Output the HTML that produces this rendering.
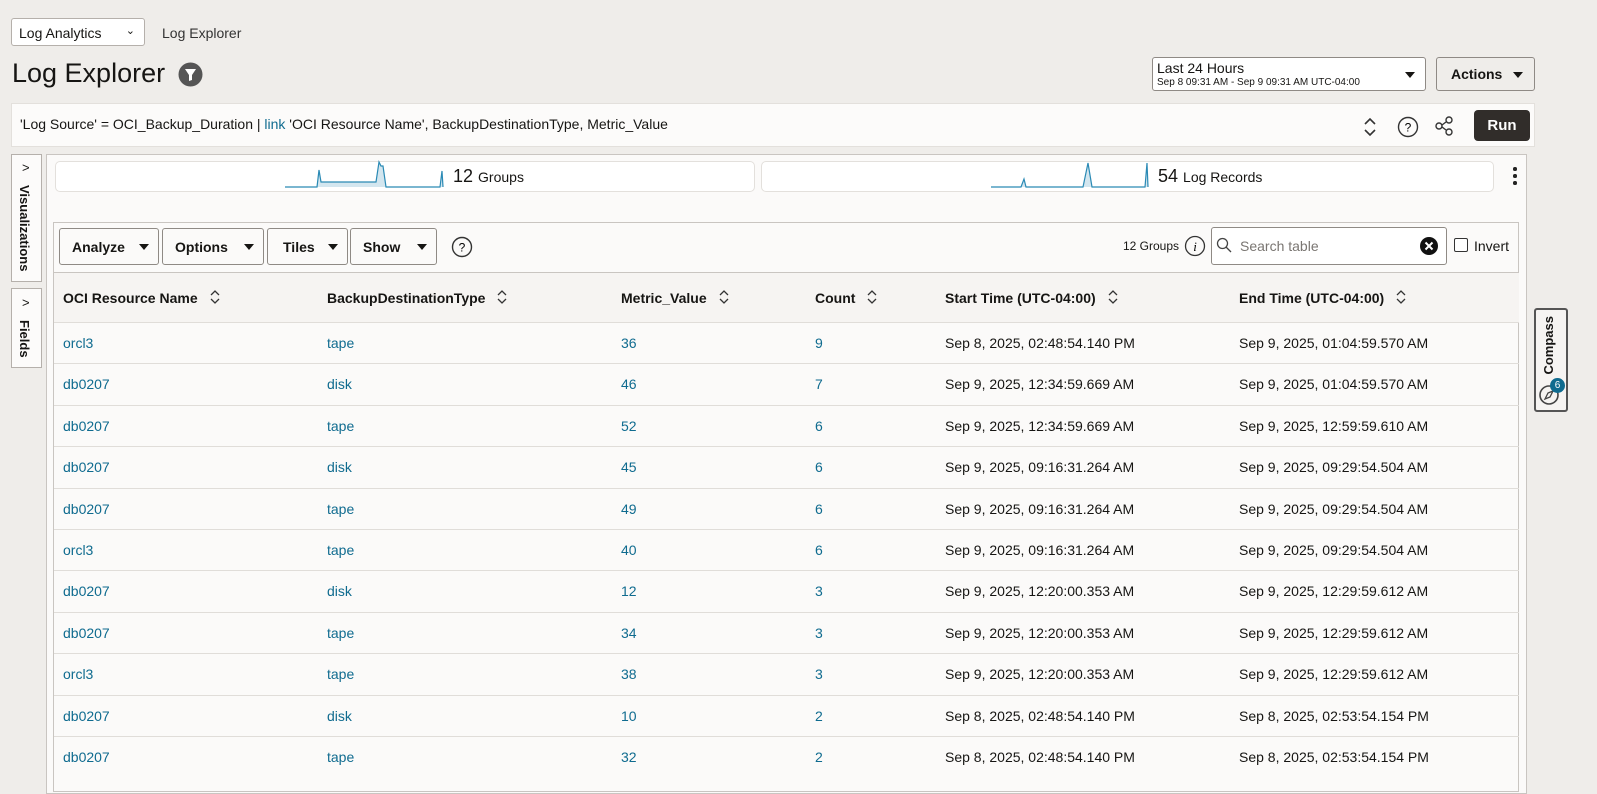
<!DOCTYPE html>
<html><head><meta charset="utf-8"><style>
*{box-sizing:border-box;margin:0;padding:0}
body{width:1597px;height:786px;overflow:hidden;background:#efedea;font-family:"Liberation Sans",sans-serif;color:#161513;position:relative}
.a{position:absolute}
.btn{position:absolute;border:1px solid #8f8a85;border-radius:3px;background:#fbfaf9;font-weight:bold;font-size:14px;display:flex;align-items:center;padding-left:12px}
.tri{display:inline-block;width:0;height:0;border-left:5px solid transparent;border-right:5px solid transparent;border-top:6px solid #161513;position:absolute}
.link{color:#0f6b8f}
.row{position:absolute;left:54px;width:1465px;height:41.4px;border-top:1px solid #e0ddd9;font-size:14px;line-height:41px}
.row span{position:absolute;top:0}
.sort{display:inline-block;margin-left:12px;vertical-align:middle;position:relative;top:-2px}
</style></head><body>
<div class="a" style="left:11px;top:18px;width:134px;height:28px;border:1px solid #b5b0ab;border-radius:3px;background:#fff;font-size:14px;padding:6px 7px">Log Analytics<span class="a" style="right:9px;top:5px;font-size:11px">&#8964;</span></div>
<div class="a" style="left:162px;top:25px;font-size:14px;color:#333">Log Explorer</div>
<div class="a" style="left:12px;top:58px;font-size:27px">Log Explorer</div>
<svg class="a" style="left:178px;top:62px" width="25" height="25"><circle cx="12.5" cy="12.5" r="12" fill="#555"/><path d="M7 7h11l-4 6v5l-3 1v-6z" fill="#fff"/></svg>
<div class="a" style="left:1152px;top:57px;width:274px;height:34px;border:1px solid #8f8a85;border-radius:3px;background:#fff;padding:2px 4px"><div style="font-size:14px">Last 24 Hours</div><div style="font-size:10px;margin-top:1px">Sep 8 09:31 AM - Sep 9 09:31 AM UTC-04:00</div><span class="tri" style="right:10px;top:14px"></span></div>
<div class="btn" style="left:1436px;top:57px;width:99px;height:34px;background:#efedea;padding-left:14px">Actions<span class="tri" style="right:11px;top:14px"></span></div>
<div class="a" style="left:11px;top:103px;width:1524px;height:44px;background:#fcfbfa;border:1px solid #e3e0dc"></div>
<div class="a" style="left:20px;top:116px;font-size:14px">'Log Source' = OCI_Backup_Duration | <span class="link">link</span> 'OCI Resource Name', BackupDestinationType, Metric_Value</div>
<svg class="a" style="left:1363px;top:117px" width="14" height="20"><path d="M2 7l5-5 5 5M2 13l5 5 5-5" fill="none" stroke="#333" stroke-width="1.6"/></svg>
<svg class="a" style="left:1397px;top:116px" width="22" height="22"><circle cx="11" cy="11" r="9.5" fill="none" stroke="#333" stroke-width="1.4"/><text x="11" y="15.5" font-size="12" text-anchor="middle" font-family="Liberation Sans">?</text></svg>
<svg class="a" style="left:1435px;top:116px" width="20" height="20"><circle cx="4" cy="10" r="3" fill="none" stroke="#333" stroke-width="1.4"/><circle cx="14" cy="4" r="3" fill="none" stroke="#333" stroke-width="1.4"/><circle cx="14" cy="16" r="3" fill="none" stroke="#333" stroke-width="1.4"/><path d="M7 9l4-3M7 11l4 3" stroke="#333" stroke-width="1.4"/></svg>
<div class="a" style="left:1474px;top:110px;width:56px;height:31px;background:#312d2a;border-radius:4px;color:#fff;font-weight:bold;font-size:15px;text-align:center;line-height:31px">Run</div>
<div class="a" style="left:11px;top:154px;width:31px;height:128px;border:1px solid #b5b0ab;background:#fcfbfa"></div>
<div class="a" style="left:22px;top:160px;font-size:13px">&gt;</div>
<div class="a" style="left:17px;top:185px;writing-mode:vertical-rl;font-weight:bold;font-size:13px">Visualizations</div>
<div class="a" style="left:11px;top:288px;width:31px;height:80px;border:1px solid #b5b0ab;background:#fcfbfa"></div>
<div class="a" style="left:22px;top:295px;font-size:13px">&gt;</div>
<div class="a" style="left:17px;top:320px;writing-mode:vertical-rl;font-weight:bold;font-size:13px">Fields</div>
<div class="a" style="left:46px;top:154px;width:1481px;height:640px;background:#fbfaf9;border:1px solid #c9c5c1"></div>
<div class="a" style="left:55px;top:161px;width:700px;height:31px;background:#fff;border:1px solid #e3e0dc;border-radius:5px"></div>
<div class="a" style="left:761px;top:161px;width:733px;height:31px;background:#fff;border:1px solid #e3e0dc;border-radius:5px"></div>
<svg class="a" style="left:285px;top:160px" width="160" height="30"><path d="M0 27H32L34 10L36 22H91L94 2L96 6H98L101 27H155L157 11L158 27" fill="#d3e6ef" stroke="#2a8ab5" stroke-width="1.2"/></svg>
<svg class="a" style="left:991px;top:160px" width="160" height="30"><path d="M0 27H30L33 19L35 27H92L97 3L101 27H154L156 3L157 27" fill="#d3e6ef" stroke="#2a8ab5" stroke-width="1.2"/></svg>
<div class="a" style="left:453px;top:166px;font-size:18px">12 <span style="font-size:14px">Groups</span></div>
<div class="a" style="left:1158px;top:166px;font-size:18px">54 <span style="font-size:14px">Log Records</span></div>
<div class="a" style="left:1513px;top:167px;width:3.5px;height:3.5px;background:#222;border-radius:50%;box-shadow:0 7px #222,0 14px #222"></div>
<div class="a" style="left:53px;top:222px;width:1466px;height:570px;border:1px solid #c9c5c1;background:#fbfaf9"></div>
<div class="btn" style="left:59px;top:228px;width:100px;height:37px">Analyze<span class="tri" style="right:9px;top:15px"></span></div>
<div class="btn" style="left:162px;top:228px;width:102px;height:37px">Options<span class="tri" style="right:9px;top:15px"></span></div>
<div class="btn" style="left:267px;top:228px;width:81px;height:37px;padding-left:15px">Tiles<span class="tri" style="right:9px;top:15px"></span></div>
<div class="btn" style="left:350px;top:228px;width:87px;height:37px">Show<span class="tri" style="right:9px;top:15px"></span></div>
<svg class="a" style="left:451px;top:236px" width="22" height="22"><circle cx="11" cy="11" r="9.5" fill="none" stroke="#333" stroke-width="1.4"/><text x="11" y="15.5" font-size="12" text-anchor="middle" font-family="Liberation Sans">?</text></svg>
<div class="a" style="left:1123px;top:239px;font-size:12px">12 Groups</div>
<svg class="a" style="left:1184px;top:235px" width="22" height="22"><circle cx="11" cy="11" r="9.5" fill="none" stroke="#333" stroke-width="1.3"/><text x="11" y="16" font-size="13" font-style="italic" text-anchor="middle" font-family="Liberation Serif">i</text></svg>
<div class="a" style="left:1211px;top:227px;width:236px;height:38px;border:1px solid #8f8a85;border-radius:3px;background:#fff"></div>
<svg class="a" style="left:1216px;top:237px" width="16" height="18"><circle cx="6.5" cy="6.5" r="5" fill="none" stroke="#444" stroke-width="1.3"/><path d="M10 10l5 5" stroke="#444" stroke-width="1.3"/></svg>
<div class="a" style="left:1240px;top:238px;font-size:14px;color:#7a7672">Search table</div>
<svg class="a" style="left:1419px;top:236px" width="20" height="20"><circle cx="10" cy="10" r="9" fill="#111"/><path d="M6.5 6.5l7 7M13.5 6.5l-7 7" stroke="#fff" stroke-width="2"/></svg>
<div class="a" style="left:1454px;top:238px;width:14px;height:14px;border:1.5px solid #333;border-radius:2px;background:#fff"></div>
<div class="a" style="left:1474px;top:238px;font-size:14px">Invert</div>
<div class="a" style="left:54px;top:272px;width:1465px;height:50px;border-top:1px solid #c9c5c1;background:#f6f4f2;font-weight:bold;font-size:14px;line-height:50px">
<span class="a" style="left:9px">OCI Resource Name<svg class="sort" width="10" height="14"><path d="M1 5l4-4 4 4M1 9l4 4 4-4" fill="none" stroke="#333" stroke-width="1.3"/></svg></span>
<span class="a" style="left:273px">BackupDestinationType<svg class="sort" width="10" height="14"><path d="M1 5l4-4 4 4M1 9l4 4 4-4" fill="none" stroke="#333" stroke-width="1.3"/></svg></span>
<span class="a" style="left:567px">Metric_Value<svg class="sort" width="10" height="14"><path d="M1 5l4-4 4 4M1 9l4 4 4-4" fill="none" stroke="#333" stroke-width="1.3"/></svg></span>
<span class="a" style="left:761px">Count<svg class="sort" width="10" height="14"><path d="M1 5l4-4 4 4M1 9l4 4 4-4" fill="none" stroke="#333" stroke-width="1.3"/></svg></span>
<span class="a" style="left:891px">Start Time (UTC-04:00)<svg class="sort" width="10" height="14"><path d="M1 5l4-4 4 4M1 9l4 4 4-4" fill="none" stroke="#333" stroke-width="1.3"/></svg></span>
<span class="a" style="left:1185px">End Time (UTC-04:00)<svg class="sort" width="10" height="14"><path d="M1 5l4-4 4 4M1 9l4 4 4-4" fill="none" stroke="#333" stroke-width="1.3"/></svg></span>
</div>
<div id="rows"></div>
<div class="a" style="left:1534px;top:308px;width:34px;height:104px;border:2px solid #555;border-radius:3px;background:#f6f4f2"></div>
<div class="a" style="left:1541px;top:316px;writing-mode:vertical-rl;transform:rotate(180deg);font-weight:bold;font-size:13px">Compass</div>
<svg class="a" style="left:1538px;top:384px" width="22" height="22"><circle cx="11" cy="11" r="9" fill="none" stroke="#444" stroke-width="1.6"/><path d="M7 15l3-6 5-2-3 6z" fill="none" stroke="#444" stroke-width="1.3"/></svg>
<div class="a" style="left:1550px;top:378px;width:15px;height:15px;border-radius:50%;background:#0f6b8f;color:#fff;font-size:10px;text-align:center;line-height:15px">6</div>
<script>
var d=[["orcl3","tape","36","9","Sep 8, 2025, 02:48:54.140 PM","Sep 9, 2025, 01:04:59.570 AM"],
["db0207","disk","46","7","Sep 9, 2025, 12:34:59.669 AM","Sep 9, 2025, 01:04:59.570 AM"],
["db0207","tape","52","6","Sep 9, 2025, 12:34:59.669 AM","Sep 9, 2025, 12:59:59.610 AM"],
["db0207","disk","45","6","Sep 9, 2025, 09:16:31.264 AM","Sep 9, 2025, 09:29:54.504 AM"],
["db0207","tape","49","6","Sep 9, 2025, 09:16:31.264 AM","Sep 9, 2025, 09:29:54.504 AM"],
["orcl3","tape","40","6","Sep 9, 2025, 09:16:31.264 AM","Sep 9, 2025, 09:29:54.504 AM"],
["db0207","disk","12","3","Sep 9, 2025, 12:20:00.353 AM","Sep 9, 2025, 12:29:59.612 AM"],
["db0207","tape","34","3","Sep 9, 2025, 12:20:00.353 AM","Sep 9, 2025, 12:29:59.612 AM"],
["orcl3","tape","38","3","Sep 9, 2025, 12:20:00.353 AM","Sep 9, 2025, 12:29:59.612 AM"],
["db0207","disk","10","2","Sep 8, 2025, 02:48:54.140 PM","Sep 8, 2025, 02:53:54.154 PM"],
["db0207","tape","32","2","Sep 8, 2025, 02:48:54.140 PM","Sep 8, 2025, 02:53:54.154 PM"]];
var x=[9,273,567,761,891,1185],h="";
d.forEach(function(r,i){h+='<div class="row" style="top:'+(322+i*41.4)+'px">';r.forEach(function(c,j){h+='<span'+(j<4?' class="link"':'')+' style="left:'+x[j]+'px">'+c+'</span>'});h+='</div>'});
document.getElementById('rows').innerHTML=h;
</script>
</body></html>
